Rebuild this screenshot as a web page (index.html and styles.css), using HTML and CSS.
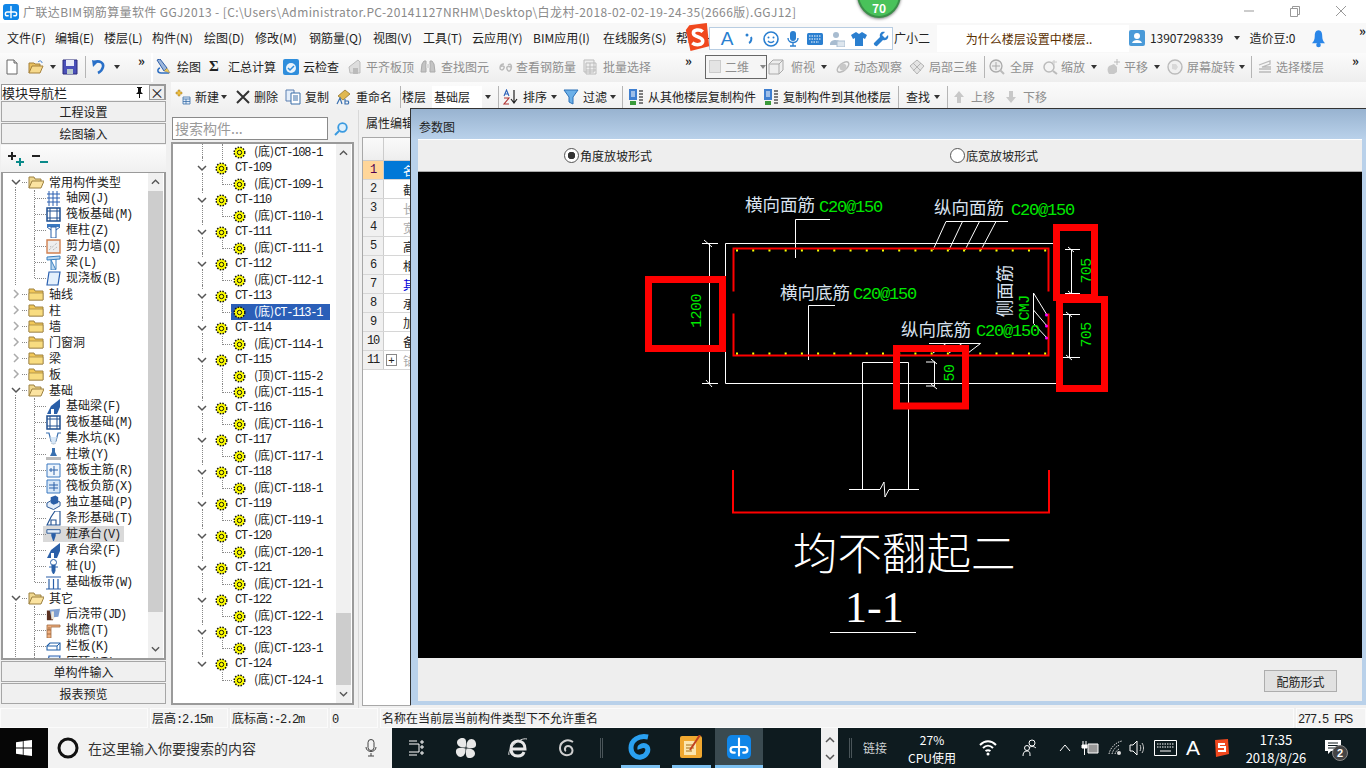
FILE: index.html
```html
<!DOCTYPE html>
<html lang="zh-CN">

<head>
  <meta charset="UTF-8">
  <title>广联达BIM钢筋算量软件 GGJ2013</title>
  <link rel="stylesheet" href="styles.css">
</head>

<body>
  <!-- shared icons -->
  <svg class="defs" xmlns="http://www.w3.org/2000/svg">
    <symbol id="i-new" viewBox="0 0 16 16"><path d="M3 1h7l3 3v11H3z" fill="#fff" stroke="#666"/><path d="M10 1v3h3" fill="#ddd" stroke="#666"/></symbol>
    <symbol id="i-open" viewBox="0 0 16 16"><path d="M1 14V4h5l1 1h5v2" fill="#e8c060" stroke="#a5803a"/><path d="M1 14l3-7h11l-3 7z" fill="#f6d98c" stroke="#a5803a"/><path d="M10 3c2-2 4-1 4 1" fill="none" stroke="#3a7bd0"/></symbol>
    <symbol id="i-save" viewBox="0 0 16 16"><path d="M1 1h14v14H1z" fill="#4a4fb8" stroke="#2a2a7a"/><path d="M4 1h8v6H4z" fill="#e8eaf8"/><path d="M5 10h6v5H5z" fill="#bcc"/></symbol>
    <symbol id="i-undo" viewBox="0 0 16 16"><path d="M3 3c6-2 10 1 9 5-.6 2.500-3 5-5 6" fill="none" stroke="#2a70c8" stroke-width="2.600"/><path d="M1 1l1 7 5-5z" fill="#2a70c8"/></symbol>
    <symbol id="i-draw" viewBox="0 0 16 16"><path d="M2 1l3-1 7 9-3 3z" fill="#9db7dc" stroke="#2f5fa8"/><path d="M5 9c-3 1-3 5 1 5h8" fill="none" stroke="#2f6fc0" stroke-width="1.500"/><path d="M9 12l3-3 3 5z" fill="#f0c850" stroke="#777" stroke-width=".5"/></symbol>
    <symbol id="i-cloud" viewBox="0 0 16 16"><rect width="16" height="16" rx="2" fill="#2f8edc"/><circle cx="8" cy="9" r="5" fill="#eaf4fc"/><path d="M5 9l2 2 4-4" fill="none" stroke="#2f8edc" stroke-width="1.500"/></symbol>
    <symbol id="i-gplane" viewBox="0 0 16 16"><path d="M2 8l9-7 2 2v11H3z" fill="#ddd" stroke="#bbb"/><path d="M6 9h5v6H6z" fill="#bbb"/></symbol>
    <symbol id="i-gbino" viewBox="0 0 16 16"><path d="M2 5l2-3h2v11H1zM14 5l-2-3h-2v11h5z" fill="#c4c4c4" stroke="#aaa"/><path d="M6 5h4v4H6z" fill="#ddd"/></symbol>
    <symbol id="i-grebar" viewBox="0 0 16 16"><path d="M6 5c-3 0-4 2-4 4s3 3 4 0-3-2-4-1M10 6c3-2 4 1 3 4s-3 3-4 0 2-3 4-2" fill="none" stroke="#bbb" stroke-width="1.500"/></symbol>
    <symbol id="i-gbatch" viewBox="0 0 16 16"><path d="M1 1h10v12H1z" fill="#eee" stroke="#bbb"/><path d="M3 4h10v11H3zM3 8h10M3 11h10M7 4v11" fill="none" stroke="#bbb"/></symbol>
    <symbol id="i-gcube" viewBox="0 0 16 16"><path d="M1 5l4-4h10v10l-4 4H1z" fill="#eee" stroke="#aaa"/><path d="M1 5h10v10M11 5l4-4" fill="none" stroke="#aaa"/></symbol>
    <symbol id="i-gorbit" viewBox="0 0 16 16"><ellipse cx="8" cy="8" rx="7" ry="3.500" transform="rotate(-40 8 8)" fill="none" stroke="#bbb" stroke-width="1.500"/><circle cx="8" cy="8" r="3.500" fill="#c8c8c8"/></symbol>
    <symbol id="i-glocal" viewBox="0 0 16 16"><path d="M8 1l7 6-7 8-7-8z" fill="#e4e4e4" stroke="#b4b4b4"/><path d="M4 4l8 8M12 4l-8 8" stroke="#b4b4b4"/></symbol>
    <symbol id="i-gfull" viewBox="0 0 16 16"><circle cx="7" cy="7" r="6" fill="#eee" stroke="#aaa" stroke-width="1.300"/><path d="M7 3v8M3 7h8" stroke="#aaa"/><path d="M11 11l4 4" stroke="#bbb" stroke-width="2"/></symbol>
    <symbol id="i-gzoom" viewBox="0 0 16 16"><circle cx="7" cy="8" r="5" fill="#f4f4f4" stroke="#bbb" stroke-width="1.500"/><path d="M11 12l4 3" stroke="#bbb" stroke-width="2"/><path d="M12 1v5M10 3h5" stroke="#ccc"/></symbol>
    <symbol id="i-gpan" viewBox="0 0 16 16"><path d="M4 15c-2-3-2-6 0-8l5-2 3 3v5l-3 2z" fill="#c8c8c8"/><path d="M12 0v6M9 3h6" stroke="#bbb"/></symbol>
    <symbol id="i-grotate" viewBox="0 0 16 16"><circle cx="8" cy="8" r="7" fill="#f0f0f0" stroke="#bbb" stroke-width="1.400"/><path d="M5 5h4l2 3-2 3-4-1z" fill="#d8d8d8"/></symbol>
    <symbol id="i-gfloor" viewBox="0 0 16 16"><path d="M2 6l11-4v3L5 8h9M2 10h12M2 13h12" fill="none" stroke="#bbb" stroke-width="1.300"/></symbol>
    <symbol id="i-add" viewBox="0 0 16 16"><path d="M3 1h2v2h2v2H5v2H3V5H1V3h2z" fill="#f0c040" stroke="#a07820" stroke-width=".5"/><path d="M8 8h7v7H8zM8 10h7M8 12.500h7M11 10v5" fill="#e4eefa" stroke="#3a6ea8" stroke-width=".8"/></symbol>
    <symbol id="i-del" viewBox="0 0 16 16"><path d="M2 2l12 12M14 2L2 14" stroke="#333" stroke-width="2"/></symbol>
    <symbol id="i-copy" viewBox="0 0 16 16"><path d="M1 1h8v11H1z" fill="#e4eefa" stroke="#5a7fb0"/><path d="M6 4h9v11H6z" fill="#fff" stroke="#3a6ea8"/><path d="M8 7h5M8 9h5M8 11h5" stroke="#3a6ea8"/></symbol>
    <symbol id="i-rename" viewBox="0 0 16 16"><path d="M2 7l7-6 5 4-7 6z" fill="#e0b850" stroke="#8a6a20" stroke-width=".7"/><path d="M1 15l3-6 2 6M9 10v5h3a2 2 0 0 0 0-3H9" fill="none" stroke="#3a70b0" stroke-width="1.200"/></symbol>
    <symbol id="i-sort" viewBox="0 0 16 16"><path d="M12 1v12M9 10l3 4 3-4" fill="none" stroke="#222" stroke-width="1.200"/><path d="M2 7l2.500-6L7 7M3 5h3" fill="none" stroke="#2a60b8" stroke-width="1.100"/><path d="M2 9h5l-5 6h5" fill="none" stroke="#b03030" stroke-width="1.100"/></symbol>
    <symbol id="i-filter" viewBox="0 0 16 16"><path d="M1 1h14L10 8v7l-4-2V8z" fill="#6cb0e8" stroke="#2a70b8"/></symbol>
    <symbol id="i-fromf" viewBox="0 0 16 16"><path d="M1 0h8v11H1z" fill="#3f7fd0"/><path d="M3 3h4M3 5h4M3 7h4" stroke="#fff"/><path d="M2 12h6v4H2z" fill="#3a9a3a"/><path d="M11 2h4M11 5h4M11 8h4M11 11h4M11 14h4" stroke="#555" stroke-width="1.300"/></symbol>
    <symbol id="i-gup" viewBox="0 0 16 16"><path d="M8 2l5 6h-3v6H6V8H3z" fill="#c8c8c8"/></symbol>
    <symbol id="i-gdown" viewBox="0 0 16 16"><path d="M8 14l5-6h-3V2H6v6H3z" fill="#c8c8c8"/></symbol>
    <symbol id="i-folder" viewBox="0 0 16 14"><path d="M1 13V2h5l1 2h8v9z" fill="#f2c858" stroke="#9c8040"/><path d="M1 6h14v7H1z" fill="#f8dc80" stroke="#9c8040" stroke-width=".7"/></symbol>
    <symbol id="i-folder-o" viewBox="0 0 16 14"><path d="M1 13V2h5l1 2h6v2" fill="#f0d890" stroke="#9c8040"/><path d="M1 13l3-7h12l-3 7z" fill="#fbe3a0" stroke="#9c8040"/></symbol>
    <symbol id="i-open-ch" viewBox="0 0 10 10"><path d="M1 3l4 4 4-4" fill="none" stroke="#555" stroke-width="1.500"/></symbol>
    <symbol id="i-shut-ch" viewBox="0 0 10 10"><path d="M3 1l4 4-4 4" fill="none" stroke="#aaa" stroke-width="1.500"/></symbol>
    <symbol id="i-gear" viewBox="0 0 13 13"><circle cx="6.500" cy="6.500" r="5.300" fill="#ff0" stroke="#111" stroke-width="1.500" stroke-dasharray="1.500 1.300"/><circle cx="6.500" cy="6.500" r="2.200" fill="#ff0" stroke="#111"/></symbol>
    <symbol id="i-logo" viewBox="0 0 17 17"><path d="M8.500 2.500v6M8.500 8.500H4.500a2 2 0 0 0 0 4h1M8.500 8.500h4a2 2 0 0 1 0 4h-1M8.500 8.500v6" fill="none" stroke="#fff" stroke-width="1.500" stroke-linecap="round"/></symbol>
    <symbol id="n-axis" viewBox="0 0 15 15"><path d="M1 3h13M1 7h13M1 11h13M3 0v15M7 0v15M11 0v15" stroke="#2a5fb0"/></symbol>
    <symbol id="n-raft" viewBox="0 0 15 15"><path d="M1 1h13v13H1z" fill="#fff" stroke="#1f4f90" stroke-width="1.500"/><path d="M4 1v13M11 1v13M1 4h13M1 11h13" stroke="#1f4f90"/></symbol>
    <symbol id="n-col" viewBox="0 0 15 15"><path d="M1 1h13v3H1z" fill="#3a78c0"/><path d="M5 4h5v11H5z" fill="#fff" stroke="#2a60a8"/><path d="M1 4l4 3M14 4l-4 3" stroke="#2a60a8"/></symbol>
    <symbol id="n-wall" viewBox="0 0 15 15"><path d="M1 1h13v13H1z" fill="#eee" stroke="#d08050" stroke-width="1.400"/><path d="M3 11l8-7M4 8l2-1M7 11l4-3" stroke="#aaa" stroke-dasharray="1 1"/></symbol>
    <symbol id="n-beam" viewBox="0 0 15 15"><path d="M1 2l13-1v3L1 5zM5 5l5 10H5zM10 4v10" fill="#bcd8f0" stroke="#3a80c0"/></symbol>
    <symbol id="n-slab" viewBox="0 0 15 15"><path d="M3 1h11l-2 13H1z" fill="#e4f0fc" stroke="#2a60b0" stroke-width="1.200"/></symbol>
    <symbol id="n-fbeam" viewBox="0 0 15 15"><path d="M1 15l4-8 9-7v8l-3 7z" fill="#2a5fa8"/><path d="M5 10h3v5H5z" fill="#fff"/></symbol>
    <symbol id="n-pit" viewBox="0 0 15 15"><path d="M0 2h3l2 8h5l2-8h3" fill="none" stroke="#3a70b0" stroke-width="1.200"/><path d="M4 6l2 7h3l2-7" fill="#d8e8f8" stroke="#9ab" stroke-dasharray="1 1"/></symbol>
    <symbol id="n-pier" viewBox="0 0 15 15"><path d="M6 1h3v4l2 4H4l2-4z" fill="#3a70b0"/><path d="M0 10h15v3H0z" fill="#bbb"/></symbol>
    <symbol id="n-main" viewBox="0 0 15 15"><path d="M1 1h13v13H1z" fill="#eef5fc" stroke="#3a78c0"/><path d="M8 3v9M3 7h9M5 5v4" fill="none" stroke="#2a60a8"/></symbol>
    <symbol id="n-neg" viewBox="0 0 15 15"><path d="M1 1h13v13H1z" fill="#d8e8f8" stroke="#3a78c0"/><path d="M8 3v9M3 6h9M3 9h9" fill="none" stroke="#2a60a8"/></symbol>
    <symbol id="n-iso" viewBox="0 0 16 15"><path d="M1 8l7-4 7 3v4l-7 4-7-3z" fill="#e4eefa" stroke="#1f4f90"/><path d="M5 2l5-2 3 2v6l-5 2-3-2z" fill="#2a5fa8"/></symbol>
    <symbol id="n-strip" viewBox="0 0 15 15"><path d="M1 14l4-8 4-6h5v14zM5 14V9h5v5" fill="#fff" stroke="#1f4f90" stroke-width="1.100"/></symbol>
    <symbol id="n-cap" viewBox="0 0 17 15"><path d="M1 2h15v4H1z" fill="#e4eefa" stroke="#1f4f90"/><path d="M6 6h5v3l-2 6H8L6 9z" fill="#2a5fa8"/></symbol>
    <symbol id="n-pile" viewBox="0 0 15 15"><circle cx="7.500" cy="3.500" r="3" fill="#fff" stroke="#2a60a8"/><path d="M6 6h3v6l-1.500 3L6 12zM3 8h9" fill="#2a60a8" stroke="#2a60a8"/></symbol>
    <symbol id="n-band" viewBox="0 0 15 15"><path d="M0 2h15M0 14h15M3 4v10M7.500 4v10M12 4v10" stroke="#2a5fa8" stroke-width="1.200"/></symbol>
    <symbol id="n-post" viewBox="0 0 17 15"><path d="M1 3h7v11H1z" fill="#5a3020"/><path d="M4 2l12-1-2 9-8 1z" fill="#7f9fd0"/><path d="M6 4h3v9H6z" fill="#f0e8d8"/></symbol>
    <symbol id="n-eave" viewBox="0 0 15 15"><path d="M1 2h13v2H5v11H1z" fill="#f0b080" stroke="#a06a40" stroke-width=".8"/><path d="M1 7h4M1 11h4M3 4v3" stroke="#a06a40"/></symbol>
    <symbol id="n-rail" viewBox="0 0 15 15"><path d="M1 7l3-3h10v7H1z" fill="#fff" stroke="#1f5fa8" stroke-width="1.100"/><path d="M1 7h10v4M11 7l3-3" fill="none" stroke="#1f5fa8"/></symbol>
  </svg>

  <header class="titlebar">
    <svg class="app-logo" viewBox="0 0 17 17"><rect width="17" height="17" rx="3" fill="#1186e8"/><use href="#i-logo"/></svg>
    <span class="title-text">广联达BIM钢筋算量软件 GGJ2013 - [C:\Users\Administrator.PC-20141127NRHM\Desktop\白龙村-2018-02-02-19-24-35(2666版).GGJ12]</span>
    <span class="win-ctl">
      <svg width="10" height="10" viewBox="0 0 10 10"><path d="M0 5h10" stroke="#999"/></svg>
      <svg width="10" height="11" viewBox="0 0 10 11"><path d="M.5 2.500h7v8h-7zM2.500 2.500v-2h7v8h-2" fill="none" stroke="#999"/></svg>
      <svg width="10" height="10" viewBox="0 0 10 10"><path d="M0 0l10 10M10 0L0 10" stroke="#999"/></svg>
    </span>
  </header>

  <nav class="menubar">
    <span>文件(F)</span><span>编辑(E)</span><span>楼层(L)</span><span>构件(N)</span><span>绘图(D)</span><span>修改(M)</span><span>钢筋量(Q)</span><span>视图(V)</span><span>工具(T)</span><span>云应用(Y)</span><span>BIM应用(I)</span><span>在线服务(S)</span><span>帮助(H)</span>
    <div class="menu-right">
      <span class="xiaoer">广小二</span>
      <span class="news">为什么楼层设置中楼层..</span>
      <svg class="user-ic" viewBox="0 0 16 16"><rect width="16" height="16" rx="2" fill="#4a9ad8"/><circle cx="8" cy="6" r="3" fill="#fff"/><path d="M3 13c1-4 9-4 10 0z" fill="#fff"/></svg>
      <span class="phone">13907298339</span>
      <i class="caret"></i>
      <span class="beans">造价豆:0</span>
      <svg class="bell" viewBox="0 0 14 20"><path d="M7 1c-3 0-4 3-4 6 0 4-1 6-3 8h14c-2-2-3-4-3-8 0-3-1-6-4-6z" fill="#2a86e8"/><circle cx="7" cy="17" r="2.500" fill="#2a86e8"/></svg>
      <b class="more">»</b>
    </div>
  </nav>

  <!-- floats over the menu -->
  <div class="score">70</div>
  <div class="ime">
    <svg class="ime-s" viewBox="0 0 20 24"><path d="M3 2l15-2 2 20-16 4L0 6z" fill="#f0481e"/><path d="M14.500 7.500C12 5 6 5.500 6.500 9c.5 3.500 8 2.500 8 6.500 0 3.500-6 4-9 1.500" fill="none" stroke="#fff" stroke-width="3"/></svg>
    <span class="ime-a">A</span>
    <svg viewBox="0 0 16 16"><circle cx="6" cy="4" r="1.500" fill="#2a7fd0"/><path d="M10 6c1 2 0 5-2 6" fill="none" stroke="#2a7fd0" stroke-width="2"/></svg>
    <svg viewBox="0 0 16 16"><circle cx="8" cy="8" r="7" fill="none" stroke="#2a7fd0" stroke-width="1.600"/><circle cx="5.500" cy="6.500" r="1" fill="#2a7fd0"/><circle cx="10.500" cy="6.500" r="1" fill="#2a7fd0"/><path d="M5 10c1.500 2 4.500 2 6 0" fill="none" stroke="#2a7fd0" stroke-width="1.400"/></svg>
    <svg viewBox="0 0 16 16"><rect x="5" y="0" width="6" height="10" rx="3" fill="#2a7fd0"/><path d="M3 7c0 6 10 6 10 0M8 12v3M5 15h6" fill="none" stroke="#2a7fd0" stroke-width="1.400"/></svg>
    <svg viewBox="0 0 16 16"><rect y="2" width="16" height="12" rx="1.500" fill="#2a7fd0"/><path d="M2 5h12M2 8h12M4 11h8" stroke="#fff" stroke-dasharray="1.500 1"/></svg>
    <svg viewBox="0 0 16 16"><circle cx="7" cy="4" r="3" fill="#a8bcd0"/><path d="M1 13c0-5 9-5 10-2v3H1z" fill="#a8bcd0"/><path d="M8 10h8v6H8z" fill="#dde6ee" stroke="#a8bcd0"/></svg>
    <svg viewBox="0 0 16 16"><path d="M5 1L0 4l2 4 2-1v8h8V7l2 1 2-4-5-3-3 2z" fill="#2a7fd0"/></svg>
    <svg viewBox="0 0 16 16"><path d="M15 4l-3 3-3-3 3-3C9 0 6 2 7 6l-6 6c-1 1 2 4 3 3l6-6c4 1 6-2 5-5z" fill="#2a7fd0"/></svg>
  </div>

  <div class="toolbar bar-one">
    <svg class="ic"><use href="#i-new"/></svg>
    <svg class="ic"><use href="#i-open"/></svg>
    <i class="caret"></i>
    <svg class="ic"><use href="#i-save"/></svg>
    <i class="sep"></i>
    <svg class="ic"><use href="#i-undo"/></svg>
    <i class="caret"></i>
    <b class="more">»</b>
    <svg class="ic"><use href="#i-draw"/></svg>
    <span>绘图</span>
    <b class="sigma">Σ</b>
    <span>汇总计算</span>
    <svg class="ic"><use href="#i-cloud"/></svg>
    <span>云检查</span>
    <svg class="ic"><use href="#i-gplane"/></svg>
    <span class="off">平齐板顶</span>
    <svg class="ic"><use href="#i-gbino"/></svg>
    <span class="off">查找图元</span>
    <svg class="ic"><use href="#i-grebar"/></svg>
    <span class="off">查看钢筋量</span>
    <svg class="ic"><use href="#i-gbatch"/></svg>
    <span class="off">批量选择</span>
    <b class="more">»</b>
    <div class="combo"><i class="combo-box"></i><span class="off">二维</span><i class="caret"></i></div>
    <svg class="ic"><use href="#i-gcube"/></svg>
    <span class="off">俯视</span>
    <i class="caret"></i>
    <svg class="ic"><use href="#i-gorbit"/></svg>
    <span class="off">动态观察</span>
    <svg class="ic"><use href="#i-glocal"/></svg>
    <span class="off">局部三维</span>
    <i class="sep"></i>
    <svg class="ic"><use href="#i-gfull"/></svg>
    <span class="off">全屏</span>
    <svg class="ic"><use href="#i-gzoom"/></svg>
    <span class="off">缩放</span>
    <i class="caret"></i>
    <svg class="ic"><use href="#i-gpan"/></svg>
    <span class="off">平移</span>
    <i class="caret"></i>
    <svg class="ic"><use href="#i-grotate"/></svg>
    <span class="off">屏幕旋转</span>
    <i class="caret"></i>
    <i class="sep"></i>
    <svg class="ic"><use href="#i-gfloor"/></svg>
    <span class="off">选择楼层</span>
    <b class="more">»</b>
  </div>

  <div class="workspace">
    <aside class="nav-col">
      <div class="nav-title"><span class="nav-name">模块导航栏</span>
        <svg class="pin" viewBox="0 0 9 11"><path d="M2 0h5v1H6v4l2 2H1l2-2V1H2zM4 7h1v4H4z" fill="#111"/></svg>
        <span class="nav-close">×</span>
      </div>
      <div class="nav-btn">工程设置</div>
      <div class="nav-btn">绘图输入</div>
      <div class="nav-tools">
        <svg viewBox="0 0 17 14"><path d="M3 0h2v3h3v2H5v3H3V5H0V3h3z" fill="#222"/><path d="M11 6h2v3h3v2h-3v3h-2v-3H8V9h3z" fill="#0a8a8a"/></svg>
        <svg viewBox="0 0 17 14"><path d="M0 3h8v2H0z" fill="#222"/><path d="M8 9h8v2H8z" fill="#0a8a8a"/></svg>
      </div>
      <div class="tree-box nav-tree">
        <ul class="tree-list">
          <li class="grp grp-open"><svg class="ch"><use href="#i-open-ch"/></svg><svg class="fd"><use href="#i-folder-o"/></svg>常用构件类型</li>
          <li class="kid"><svg class="nic"><use href="#n-axis"/></svg>轴网<i>(J)</i></li>
          <li class="kid"><svg class="nic"><use href="#n-raft"/></svg>筏板基础<i>(M)</i></li>
          <li class="kid"><svg class="nic"><use href="#n-col"/></svg>框柱<i>(Z)</i></li>
          <li class="kid"><svg class="nic"><use href="#n-wall"/></svg>剪力墙<i>(Q)</i></li>
          <li class="kid"><svg class="nic"><use href="#n-beam"/></svg>梁<i>(L)</i></li>
          <li class="kid kid-last"><svg class="nic"><use href="#n-slab"/></svg>现浇板<i>(B)</i></li>
          <li class="grp"><svg class="ch"><use href="#i-shut-ch"/></svg><svg class="fd"><use href="#i-folder"/></svg>轴线</li>
          <li class="grp"><svg class="ch"><use href="#i-shut-ch"/></svg><svg class="fd"><use href="#i-folder"/></svg>柱</li>
          <li class="grp"><svg class="ch"><use href="#i-shut-ch"/></svg><svg class="fd"><use href="#i-folder"/></svg>墙</li>
          <li class="grp"><svg class="ch"><use href="#i-shut-ch"/></svg><svg class="fd"><use href="#i-folder"/></svg>门窗洞</li>
          <li class="grp"><svg class="ch"><use href="#i-shut-ch"/></svg><svg class="fd"><use href="#i-folder"/></svg>梁</li>
          <li class="grp"><svg class="ch"><use href="#i-shut-ch"/></svg><svg class="fd"><use href="#i-folder"/></svg>板</li>
          <li class="grp grp-open"><svg class="ch"><use href="#i-open-ch"/></svg><svg class="fd"><use href="#i-folder-o"/></svg>基础</li>
          <li class="kid"><svg class="nic"><use href="#n-fbeam"/></svg>基础梁<i>(F)</i></li>
          <li class="kid"><svg class="nic"><use href="#n-raft"/></svg>筏板基础<i>(M)</i></li>
          <li class="kid"><svg class="nic"><use href="#n-pit"/></svg>集水坑<i>(K)</i></li>
          <li class="kid"><svg class="nic"><use href="#n-pier"/></svg>柱墩<i>(Y)</i></li>
          <li class="kid"><svg class="nic"><use href="#n-main"/></svg>筏板主筋<i>(R)</i></li>
          <li class="kid"><svg class="nic"><use href="#n-neg"/></svg>筏板负筋<i>(X)</i></li>
          <li class="kid"><svg class="nic"><use href="#n-iso"/></svg>独立基础<i>(P)</i></li>
          <li class="kid"><svg class="nic"><use href="#n-strip"/></svg>条形基础<i>(T)</i></li>
          <li class="kid kid-on"><svg class="nic"><use href="#n-cap"/></svg>桩承台<i>(V)</i></li>
          <li class="kid"><svg class="nic"><use href="#n-fbeam"/></svg>承台梁<i>(F)</i></li>
          <li class="kid"><svg class="nic"><use href="#n-pile"/></svg>桩<i>(U)</i></li>
          <li class="kid kid-last"><svg class="nic"><use href="#n-band"/></svg>基础板带<i>(W)</i></li>
          <li class="grp grp-open"><svg class="ch"><use href="#i-open-ch"/></svg><svg class="fd"><use href="#i-folder-o"/></svg>其它</li>
          <li class="kid"><svg class="nic"><use href="#n-post"/></svg>后浇带<i>(JD)</i></li>
          <li class="kid"><svg class="nic"><use href="#n-eave"/></svg>挑檐<i>(T)</i></li>
          <li class="kid"><svg class="nic"><use href="#n-rail"/></svg>栏板<i>(K)</i></li>
          <li class="kid"><svg class="nic"><use href="#n-slab"/></svg>压顶<i>(YD)</i></li>
        </ul>
        <div class="vscroll"><svg class="sb-arrow" viewBox="0 0 10 10"><path d="M1 7l4-4 4 4" fill="none" stroke="#555" stroke-width="1.500"/></svg><div class="sb-track"><div class="sb-thumb"></div></div><svg class="sb-arrow" viewBox="0 0 10 10"><path d="M1 3l4 4 4-4" fill="none" stroke="#555" stroke-width="1.500"/></svg></div>
      </div>
      <div class="nav-btn">单构件输入</div>
      <div class="nav-btn">报表预览</div>
    </aside>

    <main class="main-col">
      <div class="toolbar bar-two">
        <svg class="ic"><use href="#i-add"/></svg>
        <span>新建</span>
        <i class="caret"></i>
        <svg class="ic"><use href="#i-del"/></svg>
        <span>删除</span>
        <svg class="ic"><use href="#i-copy"/></svg>
        <span>复制</span>
        <svg class="ic"><use href="#i-rename"/></svg>
        <span>重命名</span>
        <i class="sep"></i>
        <span>楼层</span>
        <span class="floor-field">基础层</span>
        <i class="caret"></i>
        <i class="sep"></i>
        <svg class="ic"><use href="#i-sort"/></svg>
        <span>排序</span>
        <i class="caret"></i>
        <svg class="ic"><use href="#i-filter"/></svg>
        <span>过滤</span>
        <i class="caret"></i>
        <i class="sep"></i>
        <svg class="ic"><use href="#i-fromf"/></svg>
        <span>从其他楼层复制构件</span>
        <svg class="ic"><use href="#i-fromf"/></svg>
        <span>复制构件到其他楼层</span>
        <i class="sep"></i>
        <span>查找</span>
        <i class="caret"></i>
        <i class="sep"></i>
        <svg class="ic"><use href="#i-gup"/></svg>
        <span class="off">上移</span>
        <svg class="ic"><use href="#i-gdown"/></svg>
        <span class="off">下移</span>
      </div>

      <div class="panes">
        <section class="ct-col">
          <div class="search-row">
            <span class="search-box">搜索构件...</span>
            <svg class="search-ic" viewBox="0 0 14 14"><circle cx="8.500" cy="5.500" r="4.300" fill="#dff0fc" stroke="#3a9ae0" stroke-width="1.800"/><path d="M5 9l-4 4" stroke="#3a9ae0" stroke-width="2"/></svg>
          </div>
          <div class="tree-box ct-tree">
            <ul class="tree-list">
              <li class="ct-kid"><span class="ct-item"><svg class="gear"><use href="#i-gear"/></svg><em>(底)</em>CT-108-1</span></li>
              <li class="ct-par"><svg class="ch"><use href="#i-open-ch"/></svg><svg class="gear"><use href="#i-gear"/></svg>CT-109</li>
              <li class="ct-kid ct-last"><span class="ct-item"><svg class="gear"><use href="#i-gear"/></svg><em>(底)</em>CT-109-1</span></li>
              <li class="ct-par"><svg class="ch"><use href="#i-open-ch"/></svg><svg class="gear"><use href="#i-gear"/></svg>CT-110</li>
              <li class="ct-kid ct-last"><span class="ct-item"><svg class="gear"><use href="#i-gear"/></svg><em>(底)</em>CT-110-1</span></li>
              <li class="ct-par"><svg class="ch"><use href="#i-open-ch"/></svg><svg class="gear"><use href="#i-gear"/></svg>CT-111</li>
              <li class="ct-kid ct-last"><span class="ct-item"><svg class="gear"><use href="#i-gear"/></svg><em>(底)</em>CT-111-1</span></li>
              <li class="ct-par"><svg class="ch"><use href="#i-open-ch"/></svg><svg class="gear"><use href="#i-gear"/></svg>CT-112</li>
              <li class="ct-kid ct-last"><span class="ct-item"><svg class="gear"><use href="#i-gear"/></svg><em>(底)</em>CT-112-1</span></li>
              <li class="ct-par"><svg class="ch"><use href="#i-open-ch"/></svg><svg class="gear"><use href="#i-gear"/></svg>CT-113</li>
              <li class="ct-kid ct-last ct-on"><span class="ct-item"><svg class="gear"><use href="#i-gear"/></svg><em>(底)</em>CT-113-1</span></li>
              <li class="ct-par"><svg class="ch"><use href="#i-open-ch"/></svg><svg class="gear"><use href="#i-gear"/></svg>CT-114</li>
              <li class="ct-kid ct-last"><span class="ct-item"><svg class="gear"><use href="#i-gear"/></svg><em>(底)</em>CT-114-1</span></li>
              <li class="ct-par"><svg class="ch"><use href="#i-open-ch"/></svg><svg class="gear"><use href="#i-gear"/></svg>CT-115</li>
              <li class="ct-kid"><span class="ct-item"><svg class="gear"><use href="#i-gear"/></svg><em>(顶)</em>CT-115-2</span></li>
              <li class="ct-kid ct-last"><span class="ct-item"><svg class="gear"><use href="#i-gear"/></svg><em>(底)</em>CT-115-1</span></li>
              <li class="ct-par"><svg class="ch"><use href="#i-open-ch"/></svg><svg class="gear"><use href="#i-gear"/></svg>CT-116</li>
              <li class="ct-kid ct-last"><span class="ct-item"><svg class="gear"><use href="#i-gear"/></svg><em>(底)</em>CT-116-1</span></li>
              <li class="ct-par"><svg class="ch"><use href="#i-open-ch"/></svg><svg class="gear"><use href="#i-gear"/></svg>CT-117</li>
              <li class="ct-kid ct-last"><span class="ct-item"><svg class="gear"><use href="#i-gear"/></svg><em>(底)</em>CT-117-1</span></li>
              <li class="ct-par"><svg class="ch"><use href="#i-open-ch"/></svg><svg class="gear"><use href="#i-gear"/></svg>CT-118</li>
              <li class="ct-kid ct-last"><span class="ct-item"><svg class="gear"><use href="#i-gear"/></svg><em>(底)</em>CT-118-1</span></li>
              <li class="ct-par"><svg class="ch"><use href="#i-open-ch"/></svg><svg class="gear"><use href="#i-gear"/></svg>CT-119</li>
              <li class="ct-kid ct-last"><span class="ct-item"><svg class="gear"><use href="#i-gear"/></svg><em>(底)</em>CT-119-1</span></li>
              <li class="ct-par"><svg class="ch"><use href="#i-open-ch"/></svg><svg class="gear"><use href="#i-gear"/></svg>CT-120</li>
              <li class="ct-kid ct-last"><span class="ct-item"><svg class="gear"><use href="#i-gear"/></svg><em>(底)</em>CT-120-1</span></li>
              <li class="ct-par"><svg class="ch"><use href="#i-open-ch"/></svg><svg class="gear"><use href="#i-gear"/></svg>CT-121</li>
              <li class="ct-kid ct-last"><span class="ct-item"><svg class="gear"><use href="#i-gear"/></svg><em>(底)</em>CT-121-1</span></li>
              <li class="ct-par"><svg class="ch"><use href="#i-open-ch"/></svg><svg class="gear"><use href="#i-gear"/></svg>CT-122</li>
              <li class="ct-kid ct-last"><span class="ct-item"><svg class="gear"><use href="#i-gear"/></svg><em>(底)</em>CT-122-1</span></li>
              <li class="ct-par"><svg class="ch"><use href="#i-open-ch"/></svg><svg class="gear"><use href="#i-gear"/></svg>CT-123</li>
              <li class="ct-kid ct-last"><span class="ct-item"><svg class="gear"><use href="#i-gear"/></svg><em>(底)</em>CT-123-1</span></li>
              <li class="ct-par ct-end"><svg class="ch"><use href="#i-open-ch"/></svg><svg class="gear"><use href="#i-gear"/></svg>CT-124</li>
              <li class="ct-kid ct-last ct-end"><span class="ct-item"><svg class="gear"><use href="#i-gear"/></svg><em>(底)</em>CT-124-1</span></li>
            </ul>
            <div class="vscroll"><svg class="sb-arrow" viewBox="0 0 10 10"><path d="M1 7l4-4 4 4" fill="none" stroke="#555" stroke-width="1.500"/></svg><div class="sb-track"><div class="sb-thumb"></div></div><svg class="sb-arrow" viewBox="0 0 10 10"><path d="M1 3l4 4 4-4" fill="none" stroke="#555" stroke-width="1.500"/></svg></div>
          </div>
        </section>

        <section class="attr-col">
          <div class="attr-tab">属性编辑</div>
          <div class="attr-grid">
            <div class="ag-head"><span></span><span></span></div>
            <div class="ag-row ag-on"><span>1</span><span>名称</span></div>
            <div class="ag-row"><span>2</span><span>截面形状</span></div>
            <div class="ag-row ag-dim"><span>3</span><span>长度</span></div>
            <div class="ag-row ag-dim"><span>4</span><span>宽度</span></div>
            <div class="ag-row"><span>5</span><span>高度</span></div>
            <div class="ag-row"><span>6</span><span>相对底标高</span></div>
            <div class="ag-row ag-link"><span>7</span><span>其他钢筋</span></div>
            <div class="ag-row"><span>8</span><span>承台单边</span></div>
            <div class="ag-row"><span>9</span><span>加强筋</span></div>
            <div class="ag-row"><span>10</span><span>备注</span></div>
            <div class="ag-row ag-more"><span>11</span><span><b>+</b>锚固</span></div>
          </div>
        </section>

        <section class="dialog">
          <div class="dlg-title">参数图</div>
          <div class="dlg-body">
            <div class="radios">
              <label class="radio radio-on">角度放坡形式</label>
              <label class="radio">底宽放坡形式</label>
            </div>
            <svg class="cad" viewBox="418 172 944 486" xmlns="http://www.w3.org/2000/svg">
              <g class="cad-white">
                <path d="M1060 243.500H725.500V383.500H1060"/>
                <path d="M830 219.500H795.500V258"/>
                <path d="M1008 221.500H946L933 250M962.500 221.500L949 250M979.500 221.500L965 250M996 221.500L981 250"/>
                <path d="M835 305.500H808.500V360"/>
                <path d="M980.500 343.500H929M980.500 343.500L968 353M946 343.500L933 353M962 343.500L949 353"/>
                <path d="M1033.500 293V323.500M1033.500 293L1047 315M1033.500 310L1047 326M1033.500 323.500L1047 338"/>
                <path d="M709.500 243.500V383.500M702 243.500H718M702 383.500H718M704 240L712 247M706 380L712 387"/>
                <path d="M1071.500 249.500V293.500M1065 249.500H1080M1065 293.500H1080M1068 247L1074 252M1068 291L1074 296"/>
                <path d="M1069.500 314.500V357.500M1063 314.500H1080M1063 357.500H1080M1066 312L1072 317M1066 355L1072 360"/>
                <path d="M934.500 362V386M926 362H935M926 386H935M931 359L937 364M931 384L937 389"/>
                <path d="M862.500 489.500V362.500H908.500V489.500"/>
                <path d="M849 489.500H880L884 482L885 497L889 489.500H919"/>
                <path d="M830 632.500H916"/>
              </g>
              <path class="cad-rebar" d="M733.500 291.500V248.500H1048.500V291.500M733.500 313.500V355.500H1048.500V313.500"/>
              <path class="cad-rebar" d="M733 470V512.500H1049V470"/>
              <path class="cad-dots" d="M736 250.500H1047M736 353.500H1047"/>
              <path class="cad-ends" d="M1046.500 315v.1M1046.500 326v.1M1046.500 338v.1"/>

              <text class="cad-zh" x="745" y="211">横向面筋</text>
              <text class="cad-g" x="819" y="212">C20@150</text>
              <text class="cad-zh" x="934" y="214">纵向面筋</text>
              <text class="cad-g" x="1011" y="215">C20@150</text>
              <text class="cad-zh" x="780" y="299">横向底筋</text>
              <text class="cad-g" x="853" y="299">C20@150</text>
              <text class="cad-zh" x="901" y="336">纵向底筋</text>
              <text class="cad-g" x="976" y="336">C20@150</text>
              <text class="cad-zh cad-mid" transform="rotate(-90 1005 291)" x="1005" y="297">侧面筋</text>
              <text class="cad-g cad-mid" transform="rotate(-90 1024 308)" x="1024" y="313">CMJ</text>
              <text class="cad-g cad-mid" transform="rotate(-90 696 311)" x="696" y="316">1200</text>
              <text class="cad-g cad-mid" transform="rotate(-90 1086 271)" x="1086" y="276">705</text>
              <text class="cad-g cad-mid" transform="rotate(-90 1086 335)" x="1086" y="340">705</text>
              <text class="cad-g cad-mid" transform="rotate(-90 949 373)" x="949" y="378">50</text>
              <text class="cad-title" x="793" y="570">均不翻起二</text>
              <text class="cad-sec" x="845" y="622">1-1</text>

              <g class="cad-mark">
                <rect x="648.500" y="279.500" width="74" height="69"/>
                <rect x="1056.500" y="227.500" width="38" height="70"/>
                <rect x="1059.500" y="299.500" width="45" height="89"/>
                <rect x="896.500" y="348.500" width="69" height="57.500"/>
              </g>
            </svg>
            <div class="dlg-foot"><button class="dlg-btn">配筋形式</button></div>
          </div>
        </section>
      </div>
    </main>
  </div>

  <div class="statusbar">
    <span class="st st-a"></span>
    <span class="st st-b">层高<i>:2.15m</i></span>
    <span class="st st-c">底标高<i>:-2.2m</i></span>
    <span class="st st-d"><i>0</i></span>
    <span class="st st-e">名称在当前层当前构件类型下不允许重名</span>
    <span class="st st-f"><i>277.5 FPS</i></span>
  </div>

  <footer class="taskbar">
    <div class="tb-start"><svg width="16" height="16" viewBox="0 0 16 16"><path d="M0 2.200l6.800-1v6.300H0zM7.600 1l8.400-1v7.500H7.600zM0 8.400h6.800v6.400L0 13.800zM7.600 8.400H16V16l-8.400-1.100z" fill="#fff"/></svg></div>
    <div class="tb-search">
      <svg class="cortana" viewBox="0 0 22 22"><circle cx="11" cy="11" r="9" fill="none" stroke="#111" stroke-width="3"/></svg>
      <span>在这里输入你要搜索的内容</span>
      <svg class="tb-mic" viewBox="0 0 12 18"><rect x="3" y="0.500" width="6" height="11" rx="3" fill="none" stroke="#444"/><path d="M1 8c0 6 10 6 10 0M6 14v3M3 17h6" fill="none" stroke="#444"/></svg>
    </div>
    <div class="tb-grid">
      <svg width="16" height="16" viewBox="0 0 16 16"><path d="M1 1h8M1 15h8M1 4h10v8H1M13 1h2v2h-2zM13 6h2v2h-2zM13 12h2v2h-2z" fill="none" stroke="#fff"/></svg>
      <svg width="22" height="22" viewBox="0 0 22 22"><g fill="#e8e8e8"><path d="M10.500 10.500C6 11 2 9 2 5.500 2 1 9-.5 10.500 2.500c1 2 .8 5 0 8z"/><path d="M11.500 10.500C11 6 13 2 16.500 2 21 2 22.500 9 19.500 10.500c-2 1-5 .8-8 0z"/><path d="M11.500 11.500C16 11 20 13 20 16.500 20 21 13 22.500 11.500 19.500c-1-2-.8-5 0-8z"/><path d="M10.500 11.500C11 16 9 20 5.500 20 1 20-.5 13 2.500 11.500c2-1 5-.8 8 0z"/></g></svg>
      <svg width="22" height="22" viewBox="0 0 22 22"><path d="M4 12h14c0-5-3-8-7-8s-7 3-7 8 3 7 7 7c3 0 5-1 6-4" fill="none" stroke="#e8e8e8" stroke-width="3"/><path d="M2 18C0 13 12 0 20 2" fill="none" stroke="#ddd"/></svg>
      <svg width="20" height="20" viewBox="0 0 20 20"><path d="M16 4C10 0 3 4 3 10s6 9 11 6c3-3 1-8-3-8-3 0-4 4-2 5" fill="none" stroke="#cfcfcf" stroke-width="2"/></svg>
      <i class="tb-sep"></i>
      <div class="tb-app tb-run"><svg width="26" height="26" viewBox="0 0 26 26"><path d="M21 3C12 1 4 6 4 14c0 6 5 10 10 9 6-1 8-7 6-10-3-3-8-1-7 2" fill="none" stroke="#2aa0f0" stroke-width="5"/></svg></div>
      <div class="tb-app tb-run"><svg width="24" height="24" viewBox="0 0 24 24"><rect x="1" y="1" width="22" height="22" rx="2" fill="#f0a830"/><path d="M5 6h12v14H5z" fill="#fbe6b0"/><path d="M7 10h8M7 13h8M7 16h6" stroke="#a87018"/><path d="M21 0L11 15" stroke="#c04020" stroke-width="2"/></svg></div>
      <div class="tb-app tb-active tb-run"><svg width="24" height="24" viewBox="0 0 17 17"><rect width="17" height="17" rx="3.500" fill="#1186e8"/><use href="#i-logo"/></svg></div>
      <i></i>
      <div class="tb-scroll"><svg width="10" height="10" viewBox="0 0 10 10"><path d="M1 7l4-4 4 4" fill="none" stroke="#555" stroke-width="1.500"/></svg><svg width="10" height="10" viewBox="0 0 10 10"><path d="M1 3l4 4 4-4" fill="none" stroke="#555" stroke-width="1.500"/></svg></div>
      <i class="tb-sep"></i>
      <span class="tb-txt tb-link">链接</span>
      <span class="tb-txt tb-two"><span>27%</span><span>CPU使用</span></span>
      <svg width="18" height="16" viewBox="0 0 18 16"><path d="M1 5c5-5 11-5 16 0M4 8c3-3 7-3 10 0M6.500 11c1.500-1 3.500-1 5 0" fill="none" stroke="#fff" stroke-width="2"/><circle cx="9" cy="14" r="1.500" fill="#fff"/></svg>
      <svg width="16" height="18" viewBox="0 0 16 18"><circle cx="10" cy="4" r="3" fill="none" stroke="#fff"/><circle cx="5" cy="9" r="2.500" fill="none" stroke="#fff"/><path d="M1 17c0-3 1-5 4-5s3 2 3 5M7 9c1-2 5-2 7 0" fill="none" stroke="#fff"/></svg>
      <svg width="12" height="8" viewBox="0 0 12 8"><path d="M1 7l5-6 5 6" fill="none" stroke="#fff"/></svg>
      <svg width="18" height="14" viewBox="0 0 18 14"><path d="M2 0v4M5 0v4M1 4h5v3H1zM3.500 7v7" stroke="#fff" fill="#fff"/><path d="M7 3h10v9H7z" fill="#999" stroke="#fff"/></svg>
      <svg width="16" height="16" viewBox="0 0 16 16"><path d="M1 14C2 8 8 2 14 1M4 14c1-4 4-8 8-9M7 14c.5-2 2-4 4-5" fill="none" stroke="#ddd" stroke-dasharray="1.500 1"/><circle cx="11" cy="13" r="2" fill="#ddd"/></svg>
      <svg width="16" height="16" viewBox="0 0 16 16"><path d="M1 5h3l4-4v14l-4-4H1z" fill="none" stroke="#fff"/><path d="M11 5c1 2 1 4 0 6M13 3c2 3 2 7 0 10" fill="none" stroke="#ccc"/></svg>
      <svg width="23" height="16" viewBox="0 0 23 16"><path d="M.5.500h22v15H.500z" fill="none" stroke="#fff"/><path d="M3 4h17M3 7h17" stroke="#fff" stroke-dasharray="1.500 1"/><path d="M6 11h11" stroke="#fff"/></svg>
      <span class="tb-ime">A</span>
      <svg width="15" height="18" viewBox="0 0 15 18"><path d="M1 1l13-1 1 15-13 3z" fill="#f0481e"/><path d="M11 5H5v3h6v4H4" fill="none" stroke="#fff" stroke-width="2"/></svg>
      <span class="tb-txt tb-two tb-clock"><span>17:35</span><span>2018/8/26</span></span>
      <div class="tb-notify"><svg width="16" height="16" viewBox="0 0 16 16"><path d="M0 1h16v11H6l-3 3v-3H0z" fill="#fff"/><path d="M3 4h10M3 6.500h10M3 9h10" stroke="#0e1b1f"/></svg><b>2</b></div>
    </div>
  </footer>
</body>

</html>
```
FILE: styles.css
```css
* {
  box-sizing: border-box;
}

html,
body {
  margin: 0;
  height: 100%;
}

body {
  width: 1366px;
  height: 768px;
  overflow: hidden;
  position: relative;
  display: flex;
  flex-direction: column;
  background: #f0f0f0;
  color: #222;
  font-family: "Noto Sans CJK SC", "Liberation Sans", sans-serif;
  font-size: 12px;
  line-height: 16px;
}

.defs {
  position: absolute;
  width: 0;
  height: 0;
}

svg {
  display: block;
  flex: none;
}

/* title + menu */
.titlebar {
  height: 23px;
  background: #fff;
  display: flex;
  align-items: center;
  padding-left: 3px;
  flex: none;
}

.app-logo {
  width: 16px;
  height: 16px;
}

.title-text {
  margin-left: 4px;
  color: #8a8a8a;
  white-space: nowrap;
  letter-spacing: .38px;
}

.win-ctl {
  margin-left: auto;
  display: flex;
  gap: 36px;
  padding-right: 20px;
}

.menubar {
  height: 30px;
  flex: none;
  background: #f8f8f8;
  display: grid;
  grid-template-columns: 48px 49px 48px 52px 51px 54px 64px 50px 49px 61px 70px 73px 1fr;
  align-items: center;
  padding: 0 0 0 7px;
  white-space: nowrap;
  overflow: hidden;
  position: relative;
}

.menu-right {
  position: absolute;
  left: 894px;
  top: 0;
  width: 472px;
  height: 30px;
  background: #f8f8f8;
  display: flex;
  align-items: center;
}

.xiaoer {
  width: 43px;
}

.news {
  width: 193px;
  height: 27px;
  background: #fff;
  color: #5b3000;
  line-height: 27px;
  padding-left: 29px;
}

.user-ic {
  width: 16px;
  height: 16px;
}

.phone {
  margin-left: 5px;
  width: 85px;
}

.beans {
  margin-left: 9px;
  width: 63px;
}

.bell {
  width: 13px;
  height: 19px;
}

.menu-right .more {
  margin-left: 34px;
}

.more {
  font-weight: bold;
  font-size: 13px;
  line-height: 14px;
  align-self: flex-start;
  margin-top: 1px;
  color: #222;
}

.caret {
  display: inline-block;
  width: 0;
  height: 0;
  border: 3px solid transparent;
  border-top: 4px solid #333;
  border-bottom: 0;
}

.score {
  position: absolute;
  left: 857px;
  top: -30px;
  width: 44px;
  height: 48px;
  border-radius: 50%;
  background: #49c25a;
  border: 2px solid #3a8f48;
  box-shadow: 0 1px 3px rgba(0, 0, 0, .5);
  color: #fff;
  font-weight: bold;
  font-size: 12px;
  text-align: center;
  padding-top: 28px;
  line-height: 16px;
}

.ime {
  position: absolute;
  left: 709px;
  top: 27px;
  width: 184px;
  height: 23px;
  background: #fff;
  border: 1px solid #b8cde2;
  display: flex;
  align-items: center;
  gap: 6px;
  padding-left: 9px;
}

.ime svg {
  width: 16px;
  height: 16px;
}

.ime .ime-s {
  position: absolute;
  left: -25px;
  top: -5px;
  width: 25px;
  height: 28px;
}

.ime-a {
  color: #2a7fd0;
  font-size: 19px;
  width: 16px;
  text-align: center;
  font-family: "Liberation Sans", sans-serif;
}

/* toolbars */
.toolbar {
  display: grid;
  align-items: center;
  white-space: nowrap;
}

.toolbar .ic {
  width: 16px;
  height: 16px;
}

.toolbar .off {
  color: #8f8f8f;
}

.sep {
  width: 1px;
  height: 22px;
  background: #b5b5b5;
}

.bar-one {
  flex: none;
  height: 29px;
  padding: 0 0 2px 4px;
  background:
    linear-gradient(90deg, transparent 151px, #fff 151px, #fff 153px, transparent 153px),
    linear-gradient(#fbfbfb, #eeeeee);
  grid-template-columns:
    24px 22px 12px 23px 6px 23px 24px 17px
    22px 29px 22px 55px 20px 44px 19px 54px 21px 57px 18px 67px 20px 82px
    20px 63px 23px 30px 14px 19px 55px 20px 55px 5px 21px 32px 19px 30px 14px 19px 30px 13px 20px 52px 12px 6px 19px 76px 1fr;
}

.sigma {
  font: bold 15px "Liberation Serif", serif;
  padding-left: 3px;
}

.combo {
  width: 62px;
  height: 24px;
  border: 1px solid #666;
  display: flex;
  align-items: center;
  padding-left: 3px;
  gap: 4px;
  background: #f5f5f5;
}

.combo-box {
  width: 15px;
  height: 13px;
  background: #e4e4e4;
  border: 1px solid #ccc;
}

.combo .caret {
  margin-left: 7px;
  border-top-color: #888;
}

.workspace {
  flex: none;
  height: 626px;
  display: flex;
  background: #f0f0f0;
}

.nav-col {
  width: 171px;
  flex: none;
  padding: 2px 5px 0 1px;
  display: flex;
  flex-direction: column;
}

.nav-title {
  height: 16px;
  flex: none;
  display: flex;
  align-items: center;
  border: 1px solid #999;
  border-width: 1px 1px 0;
  font-size: 13px;
  background: #fff;
  margin-bottom: 1px;
}

.nav-name {
  flex: none;
  white-space: nowrap;
}

.pin {
  width: 9px;
  height: 11px;
  margin-left: 68px;
}

.nav-close {
  width: 17px;
  height: 15px;
  margin-left: 5px;
  border: 1px solid #999;
  background: #eee;
  text-align: center;
  line-height: 13px;
  font-size: 14px;
}

.nav-btn {
  height: 21px;
  flex: none;
  border: 1px solid #a6a6a6;
  background: #f0f0f0;
  text-align: center;
  line-height: 19px;
  margin-bottom: 1px;
}

.nav-tools {
  height: 27px;
  flex: none;
  display: flex;
  align-items: center;
  gap: 7px;
  padding-left: 7px;
  background: linear-gradient(#fcfcfc, #f0f0f0);
}

.nav-tools svg {
  width: 17px;
  height: 14px;
}

/* trees */
.tree-box {
  background: #fff;
  border: 2px solid #9a9a9a;
  border-width: 1px 2px 2px 2px;
  display: flex;
  overflow: hidden;
}

.nav-tree {
  height: 488px;
  flex: none;
  margin-bottom: 1px;
}

.tree-list {
  list-style: none;
  margin: 0;
  padding: 1px 0 0;
  flex: 1;
  min-width: 0;
  overflow: hidden;
}

.tree-list li {
  height: 16px;
  display: flex;
  align-items: baseline;
  white-space: nowrap;
  position: relative;
}

.tree-list li > svg,
.ct-item > svg {
  align-self: center;
}

.tree-list i {
  font: normal 12px/14px "Liberation Mono", monospace;
  letter-spacing: -1.2px;
}

.ch {
  width: 10px;
  height: 10px;
}

.grp {
  padding-left: 8px;
}

.grp .fd {
  width: 16px;
  height: 14px;
  margin: 0 5px 0 7px;
}

.grp::after {
  content: "";
  position: absolute;
  left: 19px;
  top: 8px;
  width: 5px;
  border-top: 1px dotted #888;
}

.grp-open::before {
  content: "";
  position: absolute;
  left: 12px;
  top: 13px;
  height: 3px;
  border-left: 1px dotted #888;
}

.kid {
  padding-left: 43px;
  line-height: 14px;
  background: repeating-linear-gradient(#888 0 1px, transparent 1px 2px) 12px 0 / 1px 16px no-repeat;
}

.kid::before {
  content: "";
  position: absolute;
  left: 31px;
  top: 0;
  height: 16px;
  border-left: 1px dotted #888;
}

.kid-last::before {
  height: 8px;
}

.kid::after {
  content: "";
  position: absolute;
  left: 32px;
  top: 8px;
  width: 11px;
  border-top: 1px dotted #888;
}

.nic {
  width: 15px;
  height: 15px;
  margin-right: 5px;
  position: relative;
  z-index: 1;
}

.kid-on {
  background:
    linear-gradient(#d9d9d9, #d9d9d9) 40px 0 / 81px 16px no-repeat,
    repeating-linear-gradient(#888 0 1px, transparent 1px 2px) 12px 0 / 1px 16px no-repeat;
}

.vscroll {
  width: 15px;
  flex: none;
  margin: 0 1px;
  background: #f0f0f0;
  display: flex;
  flex-direction: column;
}

.sb-arrow {
  height: 18px;
  width: 15px;
  flex: none;
  padding: 4px 3px;
}

.sb-track {
  flex: 1;
  display: flex;
  flex-direction: column;
}

.sb-thumb {
  background: #cdcdcd;
  height: 421px;
}

.main-col {
  flex: 1;
  min-width: 0;
  display: flex;
  flex-direction: column;
}

.bar-two {
  height: 28px;
  flex: none;
  padding: 1px 0 0 4px;
  background: linear-gradient(#fbfbfb, #f0f0f0);
  grid-template-columns:
    20px 26px 14px 19px 31px 20px 31px 20px 44px 2px 30px 53px 13px 4px 21px 28px 12px 20px 27px 12px 6px 20px 115px 20px 115px 8px 28px 13px 4px 20px 32px 20px 1fr;
}

.floor-field {
  width: 50px;
  height: 22px;
  line-height: 22px;
  background: #fff;
  padding-left: 2px;
}

.panes {
  flex: 1;
  min-height: 0;
  display: flex;
}

/* component list */
.ct-col {
  width: 183px;
  flex: none;
  padding-top: 7px;
  display: flex;
  flex-direction: column;
}

.search-row {
  height: 23px;
  flex: none;
  display: flex;
  align-items: center;
  margin-bottom: 2px;
  padding-left: 1px;
}

.search-box {
  width: 156px;
  height: 23px;
  border: 1px solid #8a8a8a;
  background: #fff;
  color: #9a9a9a;
  font-size: 14px;
  line-height: 20px;
  padding-left: 2px;
}

.search-ic {
  width: 14px;
  height: 14px;
  margin-left: 6px;
}

.ct-tree {
  height: 563px;
  flex: none;
  border-top-width: 2px;
  font: 12px/16px "Liberation Mono", monospace;
  letter-spacing: -1.2px;
}

.ct-tree em {
  font: normal 12px/14px "Noto Sans CJK SC", sans-serif;
  letter-spacing: 0;
}

.ct-tree .tree-list {
  padding-top: 0;
}

.ct-tree .sb-thumb {
  height: 72px;
  margin-top: auto;
}

.gear {
  width: 13px;
  height: 13px;
}

.ct-par {
  padding-left: 24px;
}

.ct-par .gear {
  margin: 0 7px 0 8px;
}

.ct-par:not(.ct-end)::after,
.ct-kid:not(.ct-end)::after {
  content: "";
  position: absolute;
  left: 29px;
  top: 13px;
  height: 4px;
  border-left: 1px dotted #888;
}

.ct-kid {
  background: repeating-linear-gradient(#888 0 1px, transparent 1px 2px) 29px 0 / 1px 16px no-repeat;
}

.ct-kid.ct-end {
  background: none;
}

.ct-kid::before {
  content: "";
  position: absolute;
  left: 49px;
  top: 0;
  width: 9px;
  height: 16px;
  border-left: 1px dotted #888;
}

.ct-last::before {
  height: 8px;
  border-bottom: 1px dotted #888;
}

.ct-item {
  margin-left: 58px;
  width: 99px;
  height: 16px;
  display: flex;
  align-items: baseline;
  padding-left: 2px;
  line-height: 14px;
}

.ct-item em {
  margin-left: 8px;
}

.ct-on .ct-item {
  background: #2b5fb8;
  color: #fff;
}

/* attribute grid */
.attr-col {
  width: 53px;
  flex: none;
  margin-left: 4px;
  padding-top: 5px;
  overflow: hidden;
  display: flex;
  flex-direction: column;
  border-left: 1px solid #d8d8d8;
}

.attr-tab {
  height: 22px;
  padding-left: 7px;
  white-space: nowrap;
}

.attr-grid {
  flex: 1;
  margin: 0 0 2px 3px;
  background: #fff;
  border: 1px solid #a8a8a8;
  border-right: 0;
}

.ag-head {
  height: 23px;
  display: flex;
  background: linear-gradient(#fafafa, #eeeeee);
  border-bottom: 1px solid #ccc;
}

.ag-head span:first-child {
  width: 21px;
  border-right: 1px solid #ccc;
}

.ag-row {
  height: 19px;
  display: flex;
  white-space: nowrap;
  border-bottom: 1px solid #d6d6d6;
  line-height: 19px;
}

.ag-row span:first-child {
  width: 21px;
  flex: none;
  background: #f0f0f0;
  border-right: 1px solid #ccc;
  text-align: center;
  font: 12px/19px "Liberation Mono", monospace;
  letter-spacing: -1.2px;
}

.ag-row span:last-child {
  padding-left: 19px;
  flex: 1;
}

.ag-on span:first-child {
  background: #ffd699;
  color: #500050;
}

.ag-on span:last-child {
  background: #0078d7;
  color: #fff;
}

.ag-dim span:last-child {
  color: #aaa;
}

.ag-link span:last-child {
  color: #0000d8;
}

.ag-more span:last-child {
  padding-left: 2px;
  display: flex;
  color: #aaa;
}

.ag-more b {
  width: 11px;
  height: 12px;
  border: 1px solid #888;
  color: #222;
  font: normal 11px/10px "Liberation Sans", sans-serif;
  text-align: center;
  margin: 3px 6px 0 0;
  flex: none;
}

/* dialog */
.dialog {
  flex: 1;
  min-width: 0;
  height: 597px;
  margin: -2px 0 0 -1px;
  border: 1px solid #333;
  border-width: 1px 0 0 1px;
  background: linear-gradient(#98b3d0, #b9d1ea 30px);
  padding: 0 4px 4px 7px;
  display: flex;
  flex-direction: column;
}

.dlg-title {
  height: 30px;
  flex: none;
  padding: 10px 0 0 1px;
  color: #222;
}

.dlg-body {
  flex: 1;
  min-height: 0;
  background: #eeeeee;
  border-top: 1px solid #fff;
  display: flex;
  flex-direction: column;
}

.radios {
  height: 32px;
  flex: none;
  display: flex;
  align-items: center;
  padding-left: 146px;
  gap: 298px;
  border-bottom: 1px solid #aaa;
}

.radio {
  display: flex;
  align-items: center;
  gap: 1px;
}

.radio::before {
  content: "";
  width: 13px;
  height: 13px;
  border-radius: 50%;
  border: 1px solid #555;
  background: #fff;
}

.radio-on::before {
  background: radial-gradient(#333 0 3.500px, #fff 4px);
}

.cad {
  width: 944px;
  height: 486px;
  background: #000;
  flex: none;
}

.cad-white path {
  fill: none;
  stroke: #fff;
  stroke-width: 1;
}

.cad-rebar {
  fill: none;
  stroke: #f00;
  stroke-width: 2;
}

.cad-dots {
  fill: none;
  stroke: #ff0;
  stroke-width: 2;
  stroke-dasharray: 2 14.220;
}

.cad-ends {
  stroke: #f0f;
  stroke-width: 3;
  stroke-linecap: round;
}

.cad-zh {
  fill: #d9e2ee;
  font: 17.500px "Noto Sans CJK SC", sans-serif;
}

.cad-g {
  fill: #00e800;
  font: 17px "Liberation Mono", monospace;
  letter-spacing: -1.2px;
}

.cad-mid {
  text-anchor: middle;
  font-size: 15px;
  letter-spacing: -.6px;
}

.cad-zh.cad-mid {
  font-size: 17.500px;
  letter-spacing: 0;
}

.cad-title {
  fill: #fff;
  font: 300 44.500px "Noto Sans CJK SC", sans-serif;
}

.cad-sec {
  fill: #fff;
  font: 44px "Liberation Serif", serif;
}

.cad-mark rect {
  fill: none;
  stroke: #f00;
  stroke-width: 7;
}

.dlg-foot {
  flex: 1;
  display: flex;
  justify-content: flex-end;
  padding: 12px 25px 0 0;
}

.dlg-btn {
  width: 73px;
  height: 22px;
  background: #e1e1e1;
  border: 1px solid #adadad;
  font: 12px "Noto Sans CJK SC", sans-serif;
  color: #222;
  padding: 0;
}

/* status */
.statusbar {
  height: 20px;
  flex: none;
  display: flex;
  gap: 2px;
  background: #f0f0f0;
  white-space: nowrap;
}

.st {
  border: 1px solid #fbfbfb;
  background: #f3f3f3;
  padding-left: 1px;
  line-height: 18px;
  flex: none;
}

.st i {
  font: normal 12px/18px "Liberation Mono", monospace;
  letter-spacing: -1.2px;
}

.st-a {
  width: 148px;
}

.st-b {
  width: 78px;
}

.st-c {
  width: 98px;
}

.st-d {
  width: 48px;
}

.st-e {
  width: 914px;
}

.st-f {
  width: 70px;
}

/* taskbar */
.taskbar {
  flex: 1;
  display: flex;
  background: #0e1b1f;
  color: #fff;
  min-height: 0;
}

.tb-start {
  width: 48px;
  flex: none;
  background: #060606;
  display: flex;
  align-items: center;
  justify-content: center;
}

.tb-search {
  width: 344px;
  flex: none;
  background: #f2f2f2;
  color: #333;
  display: flex;
  align-items: center;
}

.cortana {
  width: 22px;
  height: 22px;
  margin-left: 9px;
}

.tb-search span {
  margin-left: 9px;
  width: 277px;
  font-size: 14px;
}

.tb-mic {
  width: 12px;
  height: 18px;
}

.tb-grid {
  flex: 1;
  display: grid;
  grid-template-columns: 48px 52px 52px 46px 22px 56px 46px 49px 58px 17px 24px 26px 88px 24px 60px 10px 40px 12px 30px 26px 30px 26px 84px 30px;
  justify-items: center;
  align-items: center;
}

.tb-sep {
  width: 3px;
  height: 20px;
  border: 1px solid #4a5559;
  border-width: 0 1px;
}

.tb-app {
  width: 39px;
  height: 40px;
  display: flex;
  align-items: center;
  justify-content: center;
}

.tb-run {
  border-bottom: 3px solid #7cc0f0;
}

.tb-active {
  width: 48px;
  background: #3a4a50;
}

.tb-scroll {
  width: 17px;
  height: 40px;
  background: #f0f0f0;
  display: flex;
  flex-direction: column;
  align-items: center;
  justify-content: space-around;
  padding: 3px 0;
}

.tb-txt {
  white-space: nowrap;
}

.tb-link {
  color: #cdd2d4;
}

.tb-two {
  display: flex;
  flex-direction: column;
  align-items: center;
  line-height: 17px;
  gap: 1px;
}

.tb-clock {
  font-size: 13px;
}

.tb-ime {
  font: 21px "Liberation Sans", sans-serif;
}

.tb-notify {
  position: relative;
  width: 16px;
  height: 18px;
}

.tb-notify b {
  position: absolute;
  left: 7px;
  top: 6px;
  width: 16px;
  height: 16px;
  border-radius: 50%;
  background: #444;
  border: 1px solid #888;
  font: bold 11px/14px "Liberation Sans", sans-serif;
  text-align: center;
}
```
